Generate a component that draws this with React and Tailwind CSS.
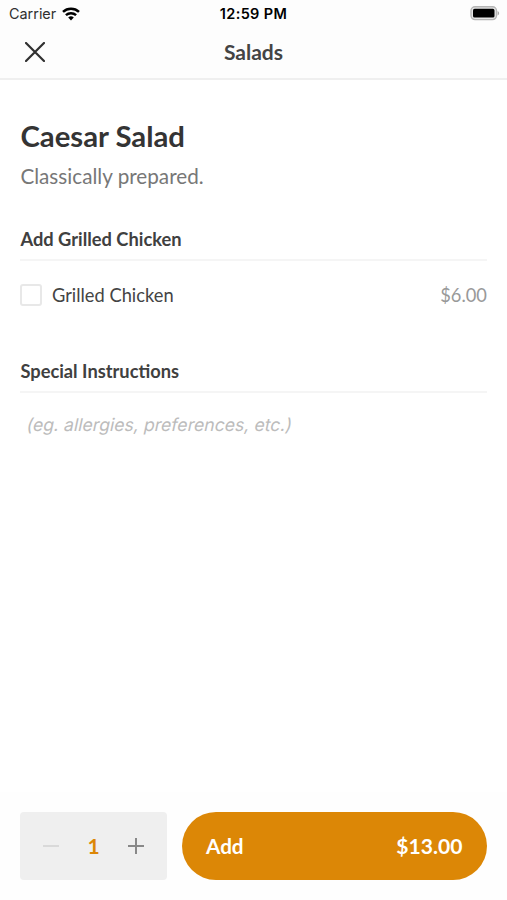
function StatusBar() {
  return (
    <div className="grid h-[27px] grid-cols-[1fr_auto_1fr] items-center pl-[9px] pr-[7px] font-['Inter',sans-serif] text-[14.4px] leading-none text-black">
      <div className="flex items-center gap-[6px] text-[#303030]">
        <span className="pt-[2px]">Carrier</span>
        <svg width="18" height="14" viewBox="0 0 18 14" fill="none" stroke="#000" strokeWidth="2.5">
          <path d="M1 4.8C5.5.6 12.5.6 17 4.8" />
          <path d="M3.9 8.1c2.9-2.6 7.3-2.6 10.2 0" />
          <path d="M9 13.4 6.2 10.6a4 4 0 0 1 5.6 0Z" fill="#000" stroke="none" />
        </svg>
      </div>
      <span className="-ml-[2px] pt-[2px] text-center text-[14.5px] font-semibold tracking-[0.35px]">12:59 PM</span>
      <svg className="justify-self-end" width="30" height="16" viewBox="0 0 30 16">
        <rect x="1" y=".8" width="25.5" height="12.8" rx="4" fill="#e6e6e6" stroke="#b5b5b5" strokeWidth="1.4" />
        <rect x="3" y="2.8" width="21.5" height="8.8" rx="1.6" fill="#000" />
        <path d="M27.6 5c2 .8 2 3.7 0 4.5Z" fill="#a8a8a8" />
      </svg>
    </div>
  );
}

function SectionTitle({ children }) {
  return (
    <h2 className="h-[33px] border-b-2 border-[#f5f5f5] text-[18.3px] font-bold leading-[22px] text-[#404040]">
      {children}
    </h2>
  );
}

export default function App() {
  return (
    <div className="flex h-[900px] w-[507px] flex-col bg-white font-['Lato',sans-serif]">
      <header className="h-[80px] border-b-2 border-[#efefef] bg-[#fdfdfd]">
        <StatusBar />
        <div className="grid h-[50px] grid-cols-3 items-center px-[25px]">
          <button aria-label="Close">
            <svg width="20" height="20" viewBox="0 0 20 20" stroke="#303030" strokeWidth="2.2" strokeLinecap="round">
              <path d="M1 1 19 19M19 1 1 19" />
            </svg>
          </button>
          <span className="pb-px text-center text-[21px] font-bold leading-none text-[#444]">Salads</span>
        </div>
      </header>

      <main className="flex-1 pl-[20.4px] pr-[19.6px] pt-[38px]">
        <h1 className="text-[29.3px] font-bold leading-[36px] text-[#343434]">Caesar Salad</h1>
        <p className="mt-[9px] text-[20.7px] leading-[26px] text-[#777]">Classically prepared.</p>

        <div className="mt-[39px]">
          <SectionTitle>Add Grilled Chicken</SectionTitle>
          <label className="mt-[22px] flex h-[24px] items-center text-[18.3px] text-[#444]">
            <span className="h-[22px] w-[22px] rounded-[3px] border-2 border-[#e8e8e8] bg-white" />
            <span className="ml-[9.6px] flex-1 pt-[2px]">Grilled Chicken</span>
            <span className="pr-[0.5px] pt-[2px] text-[18.3px] text-[#999]">$6.00</span>
          </label>
        </div>

        <div className="mt-[53px]">
          <SectionTitle>Special Instructions</SectionTitle>
          <p className="ml-[6.5px] mt-[20px] origin-left -skew-x-12 font-['Inter',sans-serif] text-[17.65px] leading-[24px] text-[#bcbcbc]">
            (eg. allergies, preferences, etc.)
          </p>
        </div>
      </main>

      <footer className="flex h-[108px] gap-[15px] bg-[#fefefe] pb-[20px] pl-[20.4px] pr-[19.6px] pt-[20px]">
        <div className="flex w-[146.6px] items-center justify-between rounded-[4px] bg-[#efefef] px-[23px]">
          <svg width="16" height="16" viewBox="0 0 16 16" stroke="#d9d9d9" strokeWidth="2">
            <path d="M0 8h16" />
          </svg>
          <span className="text-[21px] font-bold leading-[24px] text-[#dc8706]">1</span>
          <svg width="16" height="16" viewBox="0 0 16 16" stroke="#888" strokeWidth="2">
            <path d="M0 8h16M8 0v16" />
          </svg>
        </div>
        <button className="flex flex-1 items-center justify-between rounded-full bg-[#dc8706] pl-[24px] pr-[25px] text-[20.7px] font-bold leading-[24px] text-white">
          <span>Add</span>
          <span className="text-[21.1px]">$13.00</span>
        </button>
      </footer>
    </div>
  );
}
